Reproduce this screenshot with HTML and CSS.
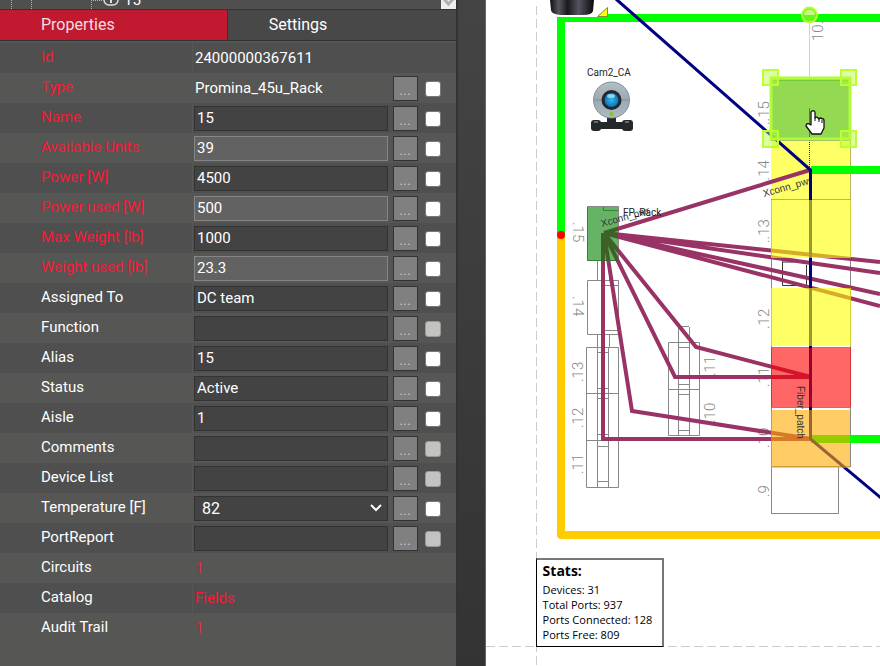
FILE: index.html
```html
<!DOCTYPE html>
<html lang="en">
<head>
<meta charset="utf-8">
<title>Rack properties</title>
<link rel="stylesheet" href="styles.css">
</head>
<body>
<aside class="panel">
  <div class="tree">
    <svg class="tree-lines" width="120" height="9" aria-hidden="true">
      <path d="M11.500 0V9M31.500 0V9M91.500 0V9M91 .5H103" fill="none" stroke="#b5b5b5" stroke-dasharray="1 1"/>
      <rect x="104" y="-9" width="14" height="14" rx="5" fill="none" stroke="#ddd" stroke-width="1.500"/>
      <path d="M111-6V3" stroke="#ddd" stroke-width="2"/>
    </svg>
    <span class="tree-name">15</span>
    <svg class="tree-scroll" width="15" height="9" aria-hidden="true"><path d="M3-1L7.500 4L12-1" fill="none" stroke="#b0b0b0" stroke-width="3"/></svg>
  </div>
  <nav class="tabs">
    <button class="tab tab-active" type="button">Properties</button>
    <button class="tab" type="button">Settings</button>
  </nav>
  <form class="props">
    <div class="row"><span class="name req">Id</span><span class="value">24000000367611</span></div>
    <div class="row"><span class="name req">Type</span><span class="value">Promina_45u_Rack</span><button class="more" type="button">...</button><input class="tick" type="checkbox" aria-label="Type"></div>
    <div class="row"><label class="name req" for="f1">Name</label><input class="field" id="f1" value="15"><button class="more" type="button">...</button><input class="tick" type="checkbox" aria-label="Name"></div>
    <div class="row"><label class="name req" for="f2">Available Units</label><input class="field fixed" id="f2" value="39" readonly><button class="more" type="button">...</button><input class="tick" type="checkbox" aria-label="Available Units"></div>
    <div class="row"><label class="name req" for="f3">Power [W]</label><input class="field" id="f3" value="4500"><button class="more" type="button">...</button><input class="tick" type="checkbox" aria-label="Power"></div>
    <div class="row"><label class="name req" for="f4">Power used [W]</label><input class="field fixed" id="f4" value="500" readonly><button class="more" type="button">...</button><input class="tick" type="checkbox" aria-label="Power used"></div>
    <div class="row"><label class="name req" for="f5">Max Weight [lb]</label><input class="field" id="f5" value="1000"><button class="more" type="button">...</button><input class="tick" type="checkbox" aria-label="Max Weight"></div>
    <div class="row"><label class="name req" for="f6">Weight used [lb]</label><input class="field fixed" id="f6" value="23.3" readonly><button class="more" type="button">...</button><input class="tick" type="checkbox" aria-label="Weight used"></div>
    <div class="row"><label class="name" for="f7">Assigned To</label><input class="field" id="f7" value="DC team"><button class="more" type="button">...</button><input class="tick" type="checkbox" aria-label="Assigned To"></div>
    <div class="row"><label class="name" for="f8">Function</label><input class="field" id="f8"><button class="more" type="button">...</button><input class="tick" type="checkbox" aria-label="Function" disabled></div>
    <div class="row"><label class="name" for="f9">Alias</label><input class="field" id="f9" value="15"><button class="more" type="button">...</button><input class="tick" type="checkbox" aria-label="Alias"></div>
    <div class="row"><label class="name" for="f10">Status</label><input class="field" id="f10" value="Active"><button class="more" type="button">...</button><input class="tick" type="checkbox" aria-label="Status"></div>
    <div class="row"><label class="name" for="f11">Aisle</label><input class="field" id="f11" value="1"><button class="more" type="button">...</button><input class="tick" type="checkbox" aria-label="Aisle"></div>
    <div class="row"><label class="name" for="f12">Comments</label><input class="field" id="f12"><button class="more" type="button">...</button><input class="tick" type="checkbox" aria-label="Comments" disabled></div>
    <div class="row"><label class="name" for="f13">Device List</label><input class="field" id="f13"><button class="more" type="button">...</button><input class="tick" type="checkbox" aria-label="Device List" disabled></div>
    <div class="row"><label class="name" for="f14">Temperature [F]</label><span class="pick"><select class="field" id="f14"><option>82</option></select><svg class="chevron" width="12" height="8" aria-hidden="true"><path d="M1 1L6 6L11 1" fill="none" stroke="#fff" stroke-width="2"/></svg></span><button class="more" type="button">...</button><input class="tick" type="checkbox" aria-label="Temperature"></div>
    <div class="row"><label class="name" for="f15">PortReport</label><input class="field" id="f15"><button class="more" type="button">...</button><input class="tick" type="checkbox" aria-label="PortReport" disabled></div>
    <div class="row"><span class="name">Circuits</span><a class="value req" href="#circuits">1</a></div>
    <div class="row"><span class="name">Catalog</span><a class="value req" href="#catalog">Fields</a></div>
    <div class="row"><span class="name">Audit Trail</span><a class="value req" href="#audit">1</a></div>
  </form>
</aside>
<div class="gutter"></div>
<main class="plan">
  <svg class="drawing" role="img" aria-label="Rack floor plan">
    <defs>
      <linearGradient id="drum"><stop offset="0" stop-color="#111"/><stop offset=".2" stop-color="#56565f"/><stop offset=".4" stop-color="#18181d"/><stop offset=".65" stop-color="#555560"/><stop offset="1" stop-color="#09090b"/></linearGradient>
      <linearGradient id="shell" x2="0" y2="1"><stop offset="0" stop-color="#b5bfc6"/><stop offset=".5" stop-color="#9ba9b1"/><stop offset="1" stop-color="#aebbc3"/></linearGradient>
      <radialGradient id="lens"><stop offset="0" stop-color="#38b9ed"/><stop offset="1" stop-color="#0874b6"/></radialGradient>
    </defs>
    <g transform="translate(-486 0)">
      <path d="M536.500 6V666M486 646.500H880" fill="none" stroke="#ccc" stroke-dasharray="9 4"/>
      <path d="M561 235V535H880" fill="none" stroke="#fc0" stroke-width="8" stroke-linejoin="round"/>
      <path d="M561 235V18H880" fill="none" stroke="#0f0" stroke-width="8"/>
      <path d="M550 10H607V17H550Z" fill="#fff"/>
      <path d="M550 0H594L593 11Q592 15 583 15H560Q551 14 551 10Z" fill="url(#drum)"/>
      <path d="M597.500 16.500H607.500V7.500Z" fill="#ff0" stroke="#8b8b35"/>
      <circle cx="561" cy="235" r="4" fill="red"/>

      <!-- webcam -->
      <text class="tag" x="587" y="76">Cam2_CA</text>
      <rect x="594" y="122" width="36" height="7" fill="#24282b"/><rect x="607" y="116" width="9" height="9" fill="#24282b"/>
      <rect x="591" y="120" width="10" height="11" rx="3" fill="#24282b"/><rect x="622" y="120" width="11" height="11" rx="3" fill="#24282b"/>
      <path d="M594 122H598M625 122H629" stroke="#626b70" stroke-width="2"/>
      <circle cx="611.500" cy="100" r="18" fill="url(#shell)" stroke="#82929b"/>
      <path d="M594 100H629" stroke="#81919a"/>
      <circle cx="611.500" cy="100" r="10" fill="#22282d"/><circle cx="611.500" cy="100" r="7" fill="url(#lens)"/>
      <ellipse cx="611" cy="96" rx="4" ry="2" fill="#8bd6ef"/>
      <circle cx="611.500" cy="114" r="2" fill="#84c51a"/>

      <!-- rack outlines -->
      <g fill="none" stroke="#888">
        <path d="M587.500 206.500H618.500V260.500H587.500ZM603.500 207V210.500H618M597.500 261V280M609.500 261V280M587.500 280.500H618.500V334.500H587.500ZM604 285.500H618M604 330.500H618M597.500 335V347"/>
        <path d="M609.500 335V347M586.500 347.500H618.500V487.500H586.500ZM586 393.500H618M586 440.500H618M597.500 347V487M608.500 347V487M597 352.500H608M597 388.500H608M597 398.500H608M597 434.500H608M597 446.500H608M597 481.500H608"/>
        <path d="M668.500 342.500H699.500V435.500H668.500ZM668 389.500H700M678.500 327V435M689.500 327V435M679 326.500H689M679 347.500H689M679 384.500H689M679 394.500H689M679 430.500H689M771.500 140V514M850.500 80V466M771 140.500H851M771 199.500H851M771 347.500H851M771 407.500H851M771 466.500H851M771 513.500H838.500V467"/>
      </g>
      <path d="M782.500 261.500V285.500H806.500V265M782 262H794" fill="none" stroke="#333"/>

      <!-- rack numbers -->
      <g class="number">
        <text transform="translate(823 41) rotate(-90)">10.</text>
        <text transform="translate(769 125) rotate(-90)">..15</text>
        <text transform="translate(769 184) rotate(-90)">..14</text>
        <text transform="translate(769 243) rotate(-90)">..13</text>
        <text transform="translate(769 329) rotate(-90)">.12</text>
        <text transform="translate(769 387) rotate(-90)">.11</text>
        <text transform="translate(769 448) rotate(-90)">.10</text>
        <text transform="translate(769 497) rotate(-90)">.9</text>
        <text transform="translate(573 222) rotate(90)">.15</text>
        <text transform="translate(573 296) rotate(90)">.14</text>
        <text transform="translate(583 382) rotate(-90)">.13</text>
        <text transform="translate(583 428) rotate(-90)">.12</text>
        <text transform="translate(583 474) rotate(-90)">.11</text>
        <text transform="translate(715 376) rotate(-90)">.11</text>
        <text transform="translate(715 423) rotate(-90)">.10</text>
      </g>

      <path d="M771 141H851V199H771Z" fill="#ffff66"/><path d="M771.500 199.500H850.500V140" fill="none" stroke="#b7b760"/>
      <text class="small" transform="translate(764 197) rotate(-16)">Xconn_pwr</text>

      <!-- cables -->
      <g fill="none" stroke="#936" stroke-width="4">
        <path d="M604 233L810 170M604 233L880 262M604 233L880 273M604 233L880 294M604 233L880 306"/>
        <path d="M603 233V439H811M604 233L632 411L811 439M604 233L675 377H811M604 233L696 347L811 377"/>
      </g>
      <path d="M811 170H880M811 439H880" stroke="#0f0" stroke-width="8"/>
      <path d="M616 -1L810.500 170V439L881 498" fill="none" stroke="#000080" stroke-width="3"/>
      <path d="M587 207H618V261H587Z" fill="#008000" fill-opacity=".6"/>
      <text class="small" transform="translate(602 227) rotate(-16)">Xconn_pwr</text>
      <text class="tag" x="623" y="216">FP_Rack</text>

      <!-- status overlays -->
      <g fill-opacity=".6">
        <path d="M771 200H851V258H771ZM771 288H851V346H771Z" fill="#ff0"/>
        <path d="M771 348H851V407H771Z" fill="red"/>
        <path d="M771 410H850V468H771Z" fill="#fa0"/>
      </g>
      <text class="small" transform="translate(797 386) rotate(90)">Fiber_patch</text>

      <!-- selected rack -->
      <path d="M809.500 140V168" stroke="#333" stroke-dasharray="1 1"/>
      <path d="M771 78H850V139H771Z" fill="#7dd12f" fill-opacity=".83" stroke="#b4fb37" stroke-width="3"/>
      <path d="M773 80.500H848" stroke="#75c938"/>
      <path d="M809.500 108V137" stroke="#458c24"/>
      <path d="M809.500 22V77" stroke="#b8f943"/>
      <circle cx="809.500" cy="15" r="7.500" fill="#66f51e" stroke="#b8ff33" stroke-width="2"/><path d="M804 15A5.500 5.500 0 0 1 815 15Z" fill="#c2fa81"/>
      <g fill="#b8ff33" fill-opacity=".45" stroke="#b8ff33" stroke-width="2"><path d="M763 70H778V85H763ZM841 70H856V85H841ZM763 131H778V147H763ZM841 131H856V147H841Z"/></g>

      <path d="M812 111Q815 110 815 113V118Q817 116 819 119Q821 117 822 119Q824 118 824 121V128L821 134H812L806 126Q806 122 811 125V112Z" fill="#fff" stroke="#111" stroke-width="1.300" stroke-linejoin="round"/>
      <path d="M815 118V121M819 119V122M822 120V123" stroke="#111"/>
    </g>
  </svg>
  <section class="stats">
    <h2 class="stats-title">Stats:</h2>
    <p class="stat">Devices: 31</p>
    <p class="stat">Total Ports: 937</p>
    <p class="stat">Ports Connected: 128</p>
    <p class="stat">Ports Free: 809</p>
  </section>
</main>
</body>
</html>
```
FILE: styles.css
```css
* { box-sizing: border-box; }

body {
  display: flex;
  height: 100vh;
  margin: 0;
  overflow: hidden;
  background: #fff;
  color: #fff;
  font: 15px/20px Roboto, sans-serif;
}

button, input, select { margin: 0; font: inherit; color: inherit; }

.panel {
  display: flex;
  flex-direction: column;
  flex: 0 0 52%;
  border-right: 2px solid #333;
  background: #565654;
}

.tree {
  display: flex;
  height: 9px;
  overflow: hidden;
  background: #4f4f4f;
  align-items: flex-end;
}
.tree-name { flex: 1; padding: 0 4px; line-height: 18px; }
.tree-scroll { background: #eee; }

.tabs {
  display: grid;
  grid-template-columns: 1fr 1fr;
  height: 32px;
  border-top: 1px solid #333;
  border-bottom: 1px solid #333;
}
.tab {
  padding: 0 41px;
  border: 0;
  background: #484848;
  font-size: 16px;
  text-align: left;
}
.tab-active { border-right: 1px solid #333; background: #c1192f; color: #f0dfe1; }

.props { padding-top: 2px; }
.row {
  display: grid;
  grid-template-columns: 192px 1fr 25px 23px;
  align-items: center;
  height: 30px;
  padding-right: 15px;
}
.row:nth-child(odd) { background: linear-gradient(to right, #4f4f4f 192px, #565654 192px, #565654 193px, #4f4f4f 193px); }
.row:last-child { background: none; }

.name { padding: 0 0 2px 41px; }
.value { padding-left: 3px; text-decoration: none; }
.req { color: #fb1735; }

.field {
  width: auto;
  min-width: 0;
  height: 25px;
  margin: 1px 5px 0 2px;
  padding: 0 2px 2px;
  border: 1px solid #333;
  border-radius: 0;
  background: #434343;
}
.fixed { border-color: #858585; background: #626262; }

.pick { display: grid; align-items: center; }
.pick > * { grid-area: 1 / 1; }
.pick .field { appearance: none; padding: 0 7px; font-size: 16px; }
.chevron { justify-self: end; margin-right: 11px; pointer-events: none; }

.more {
  height: 25px;
  margin-top: 1px;
  padding: 2px 0 0;
  border: 1px solid #333;
  background: #808080;
  color: #c0c0c0;
}
.tick {
  appearance: none;
  width: 16px;
  height: 16px;
  margin: 2px 0 0 7px;
  border: 1px solid #777;
  border-radius: 3px;
  background: #fff;
}
.tick:disabled { border-color: #999; background: #c3c3c1; }

.gutter {
  flex: 0 0 28px;
  border-right: 1px solid #666;
  background: linear-gradient(#444, #333);
}

.plan { position: relative; flex: 1; min-width: 0; }
.drawing { display: block; width: 100%; height: 100%; }
.tag { fill: #222; font-size: 10px; }
.small { fill: #333; font: 10px "Liberation Sans", sans-serif; }
.number { fill: #888; font-size: 15px; font-weight: 300; }

.stats {
  position: absolute;
  left: 50px;
  top: 558px;
  padding: 3px 10px 4px 6px;
  border: 2px solid #777;
  border-left: 1px solid #000;
  border-bottom: 1px solid #000;
  background: #fff;
  color: #000;
  font: 500 11px/15px "Open Sans", sans-serif;
}
.stats-title { margin: 0 0 4px; font-size: 14px; line-height: 15px; }
.stat { margin: 0; }
```
